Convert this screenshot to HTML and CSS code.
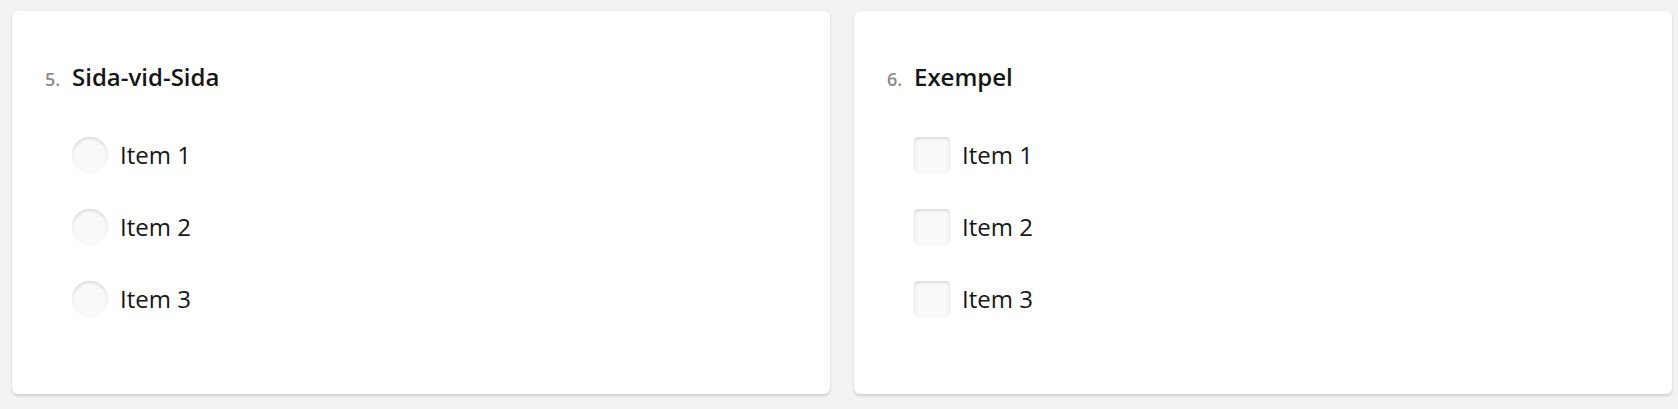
FILE: index.html
```html
<!DOCTYPE html>
<html lang="sv">
<head>
<meta charset="utf-8">
<title>Survey</title>
<link rel="stylesheet" href="styles.css">
</head>
<body>
<div class="page">
  <div class="card">
    <div class="title"><span class="num">5.</span><span class="text">Sida-vid-Sida</span></div>
    <div class="items">
      <div class="item"><span class="radio"></span><span class="label">Item 1</span></div>
      <div class="item"><span class="radio"></span><span class="label">Item 2</span></div>
      <div class="item"><span class="radio"></span><span class="label">Item 3</span></div>
    </div>
  </div>
  <div class="card">
    <div class="title"><span class="num">6.</span><span class="text">Exempel</span></div>
    <div class="items">
      <div class="item"><span class="check"></span><span class="label">Item 1</span></div>
      <div class="item"><span class="check"></span><span class="label">Item 2</span></div>
      <div class="item"><span class="check"></span><span class="label">Item 3</span></div>
    </div>
  </div>
</div>
</body>
</html>
```
FILE: styles.css
```css
html, body {
  margin: 0;
  padding: 0;
  background: #f3f3f3;
  font-family: "Open Sans", "Noto Sans", sans-serif;
  color: #161616;
}
.page {
  display: flex;
  gap: 24px;
  padding: 11px 6px 15px 12px;
  height: 409px;
  box-sizing: border-box;
}
.card {
  flex: 1 1 0;
  background: #fff;
  border-radius: 6px;
  box-shadow: 0 1.5px 3px rgba(0, 0, 0, 0.15);
  padding: 48px 60px 0 60px;
  box-sizing: border-box;
}
.title {
  display: flex;
  align-items: baseline;
  margin-left: -27px;
  font-size: 24px;
  line-height: 36px;
  font-weight: 600;
}
.num {
  width: 27px;
  font-size: 18px;
  font-weight: 600;
  color: #8c8c8c;
}
.items {
  display: flex;
  flex-direction: column;
  gap: 36px;
  margin-top: 40px;
}
.item {
  display: flex;
  align-items: center;
  gap: 12px;
  font-size: 24px;
  line-height: 36px;
}
.radio, .check {
  width: 36px;
  height: 36px;
  flex: none;
  background: #f9f9f9;
  box-shadow: inset 0 1.5px 3px rgba(0, 0, 0, 0.15);
  box-sizing: border-box;
}
.radio {
  border-radius: 50%;
}
.check {
  border-radius: 4.5px;
}
```
